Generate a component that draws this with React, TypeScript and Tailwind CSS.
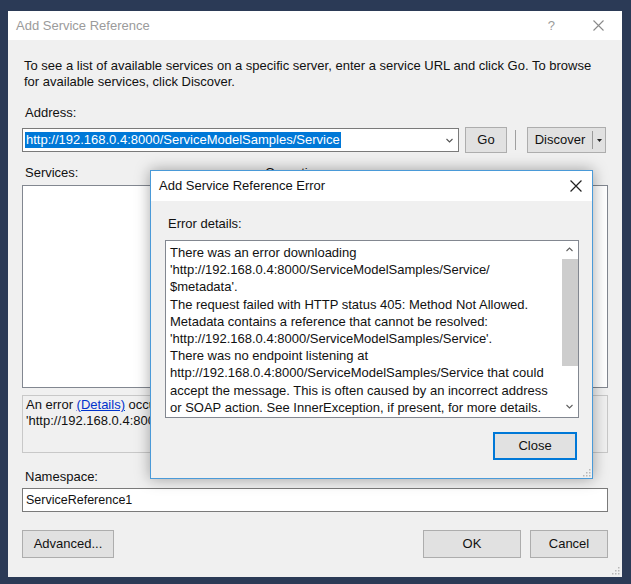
import type { ReactNode } from "react";

function XIcon({ size = 11, className = "" }: { size?: number; className?: string }) {
  return (
    <svg width={size} height={size} viewBox="0 0 11 11" className={className}>
      <path d="M0.5 0.5L10.5 10.5M10.5 0.5L0.5 10.5" stroke="currentColor" strokeWidth="1.1" fill="none" />
    </svg>
  );
}

function Chevron({ up = false, className = "" }: { up?: boolean; className?: string }) {
  return (
    <svg width="7" height="5" viewBox="0 0 7 5" className={className}>
      <path d={up ? "M0.5 4L3.5 1L6.5 4" : "M0.5 1L3.5 4L6.5 1"} stroke="currentColor" strokeWidth="1.1" fill="none" />
    </svg>
  );
}

function Btn({ children, className = "" }: { children: ReactNode; className?: string }) {
  return (
    <div className={`flex items-center justify-center border border-[#adadad] bg-[#e1e1e1] text-[13px] text-[#111] ${className}`}>
      {children}
    </div>
  );
}

function Grip() {
  const dots = [
    [7, 1],
    [4, 4],
    [7, 4],
    [1, 7],
    [4, 7],
    [7, 7],
  ];
  return (
    <svg width="9" height="9" viewBox="0 0 9 9">
      {dots.map(([x, y]) => (
        <rect key={`${x}-${y}`} x={x} y={y} width="1.5" height="1.5" fill="#b8b8b8" />
      ))}
    </svg>
  );
}

const errorLines = [
  "There was an error downloading",
  "'http://192.168.0.4:8000/ServiceModelSamples/Service/",
  "$metadata'.",
  "The request failed with HTTP status 405: Method Not Allowed.",
  "Metadata contains a reference that cannot be resolved:",
  "'http://192.168.0.4:8000/ServiceModelSamples/Service'.",
  "There was no endpoint listening at",
  "http://192.168.0.4:8000/ServiceModelSamples/Service that could",
  "accept the message. This is often caused by an incorrect address",
  "or SOAP action. See InnerException, if present, for more details.",
];

function ErrorDialog() {
  return (
    <div className="absolute left-[150px] top-[170px] flex h-[309px] w-[443px] flex-col border border-[#4a9ad8] bg-[#f0f0f0] shadow-[0_0_14px_rgba(0,0,0,0.35)]">
      <div className="flex h-[30px] items-center bg-white pl-[8px] pr-[10px]">
        <span className="text-[13px] text-[#111]">Add Service Reference Error</span>
        <XIcon size={12} className="ml-auto text-[#222]" />
      </div>
      <div className="relative flex flex-1 flex-col">
        <div className="mt-[15px] pl-[17px] text-[13px] leading-[16px] text-[#111]">Error details:</div>
        <div className="ml-[14px] mt-[8px] flex h-[178px] w-[414px] border border-[#828790] bg-white">
          <div className="flex-1 pl-[4px] pt-[3px] text-[13px] leading-[17.2px] text-[#111]">
            {errorLines.map((l) => (
              <div key={l} className="whitespace-nowrap">
                {l}
              </div>
            ))}
          </div>
          <div className="flex w-[17px] flex-col items-center">
            <div className="flex h-[17px] items-center justify-center text-[#606060]">
              <Chevron up />
            </div>
            <div className="mt-px h-[107px] w-[16px] bg-[#cdcdcd]" />
            <div className="mb-[2px] mt-auto flex h-[17px] items-center justify-center text-[#606060]">
              <Chevron />
            </div>
          </div>
        </div>
        <div className="mr-[15px] mt-[14px] flex justify-end">
          <div className="flex h-[28px] w-[84px] items-center justify-center border-2 border-[#0078d7] bg-[#e1e1e1] text-[13px] text-[#111]">
            Close
          </div>
        </div>
        <div className="absolute bottom-[1px] right-[1px]">
          <Grip />
        </div>
      </div>
    </div>
  );
}

export default function App() {
  return (
    <div className="relative h-[584px] w-[631px] overflow-hidden bg-[#2b3a56] pl-[8px] pt-[11px] font-['Liberation_Sans',Arial,sans-serif]">
      <div className="flex h-[566px] w-[614px] flex-col bg-[#f0f0f0]">
        <div className="flex h-[29px] items-center bg-white pl-[8px] pr-[18px]">
          <span className="text-[13px] text-[#9b9b9b]">Add Service Reference</span>
          <span className="ml-auto mr-[38px] text-[13px] text-[#9b9b9b]">?</span>
          <XIcon className="text-[#8a8a8a]" />
        </div>

        <div className="relative flex flex-1 flex-col px-[14px] pt-[18px] text-[13px] leading-[16px] text-[#111]">
          <div className="pl-[2px]">
            <div className="whitespace-nowrap">
              To see a list of available services on a specific server, enter a service URL and click Go. To browse
            </div>
            <div>for available services, click Discover.</div>
          </div>

          <div className="mt-[15px] pl-[3px]">Address:</div>
          <div className="mt-[6px] flex h-[26px] items-center">
            <div className="flex h-[24px] w-[437px] items-center border border-[#7a7a7a] bg-white pl-[2px] pr-[5px]">
              <span className="bg-[#0078d7] px-px leading-[16px] text-white">
                http://192.168.0.4:8000/ServiceModelSamples/Service
              </span>
              <Chevron className="ml-auto text-[#555]" />
            </div>
            <Btn className="ml-[6px] h-[26px] w-[42px]">Go</Btn>
            <div className="ml-[8px] h-[20px] w-px bg-[#a0a0a0]" />
            <div className="ml-[11px] flex h-[26px] w-[79px] border border-[#adadad] bg-[#e1e1e1] text-[13px] text-[#111]">
              <div className="flex flex-1 items-center justify-center">Discover</div>
              <div className="my-[3px] w-px bg-[#9a9a9a]" />
              <div className="flex w-[12px] items-center justify-center">
                <svg width="5" height="3" viewBox="0 0 5 3">
                  <path d="M0 0H5L2.5 3Z" fill="#222" />
                </svg>
              </div>
            </div>
          </div>

          <div className="mt-[12px] flex">
            <div className="w-[242px] pl-[3px]">Services:</div>
            <div className="pl-[1px]">Operations:</div>
          </div>
          <div className="mt-[4px] flex h-[203px] gap-[6px]">
            <div className="w-[236px] border border-[#828790] bg-white" />
            <div className="flex-1 border border-[#828790] bg-white" />
          </div>

          <div className="mt-[7px] h-[58px] border border-[#c8c8c8] pl-[3px] pt-px">
            <div className="whitespace-nowrap">
              An error <span className="text-[#0033cc] underline">(Details)</span> occurred while attempting to find
              services at
            </div>
            <div className="whitespace-nowrap">'http://192.168.0.4:8000/ServiceModelSamples/Service'.</div>
          </div>

          <div className="mt-[16px] pl-[3px]">Namespace:</div>
          <div className="mt-[3px] flex h-[24px] items-center border border-[#7a7a7a] bg-white pl-[3px] text-[12.5px]">
            ServiceReference1
          </div>

          <div className="mt-[18px] flex">
            <Btn className="h-[28px] w-[92px]">Advanced...</Btn>
            <Btn className="ml-auto h-[28px] w-[98px]">OK</Btn>
            <Btn className="ml-[9px] h-[28px] w-[78px]">Cancel</Btn>
          </div>

          <div className="absolute bottom-[2px] right-[2px]">
            <Grip />
          </div>
        </div>
      </div>

      <ErrorDialog />
    </div>
  );
}
